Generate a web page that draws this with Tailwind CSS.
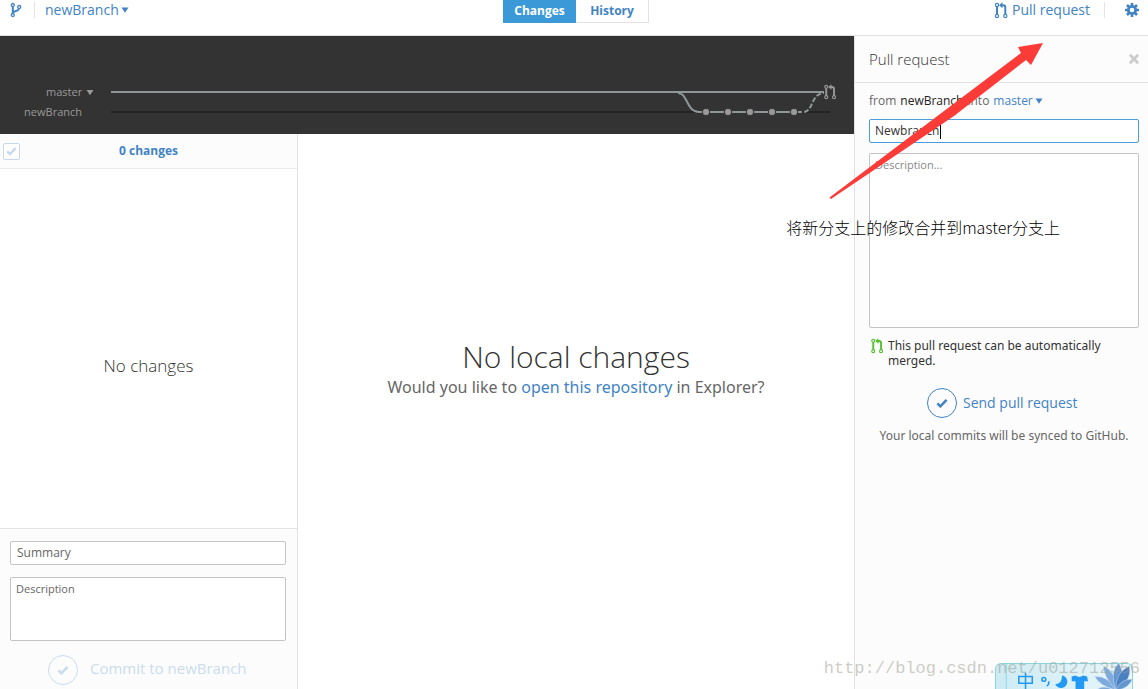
<!DOCTYPE html>
<html lang="en">
<head>
<meta charset="utf-8">
<title>newBranch</title>
<script src="https://cdn.jsdelivr.net/npm/@tailwindcss/browser@4"></script>
</head>
<body class="relative flex h-screen flex-col overflow-hidden bg-white font-['Open_Sans','Noto_Sans_CJK_SC',sans-serif] text-xs text-[#333]">
<svg class="hidden">
  <symbol id="pr" viewBox="0 0 14 17"><g fill="none" stroke="currentColor" stroke-width="1.2"><circle cx="3" cy="3" r="1.6"/><circle cx="3" cy="14" r="1.6"/><circle cx="11.3" cy="14" r="1.6"/><path d="M3 4.500v8" stroke-width="2"/><path d="M11.300 12.500V5.500Q11.300 3.200 9 3.200H7.500" stroke-width="2"/></g><path d="M8.500 .2v6L5 3.200z" fill="currentColor"/></symbol>
  <symbol id="check" viewBox="0 0 14 12"><path d="M1.5 6.5 5 10 12.5 2.2" fill="none" stroke="currentColor" stroke-width="3"/></symbol>
  <symbol id="down" viewBox="0 0 8 6"><path d="M.5 .5h7L4 5.8z" fill="currentColor"/></symbol>
</svg>

<header class="flex h-9 shrink-0 items-start border-b border-[#e2e2e2] text-[#4183c4]">
  <div class="flex h-5 flex-1 items-center">
    <button class="ml-2.5 h-4 w-3" aria-label="Create branch">
      <svg class="h-4 w-3" viewBox="0 0 12 16" fill="none" stroke="currentColor" stroke-width="1.3"><circle cx="2.8" cy="3" r="1.5"/><circle cx="2.8" cy="13" r="1.5"/><circle cx="9.2" cy="5" r="1.5"/><path d="M2.8 4.500v7M3 11q.5-1.500 3-2t3-2.500" stroke-width="2"/></svg>
    </button>
    <span class="ml-3 h-4 w-px bg-[#e5e5e5]"></span>
    <button class="ml-2.5 flex items-center gap-0.5 text-sm leading-5">newBranch<svg class="h-1.5 w-2"><use href="#down"/></svg></button>
  </div>
  <nav class="ml-1 flex h-[23px] text-xs leading-5 font-bold">
    <button class="w-[73px] bg-[#3b99d8] pb-0.5 text-white">Changes</button>
    <button class="w-[73px] border-r border-b border-[#e2e2e2]">History</button>
  </nav>
  <div class="flex h-5 flex-1 items-center justify-end">
    <button class="flex items-center gap-1 text-sm leading-5"><svg class="h-[17px] w-3.5"><use href="#pr"/></svg>Pull request</button>
    <span class="ml-3.5 h-4 w-px bg-[#e5e5e5]"></span>
    <button class="mr-[9px] ml-5 h-3.5 w-3.5" aria-label="Settings">
      <svg class="h-3.5 w-3.5" viewBox="0 0 14 14" fill="none" stroke="currentColor"><circle cx="7" cy="7" r="3.7" stroke-width="2.800"/><g stroke-width="2.600"><path d="M7 0v2.500M7 11.500V14M0 7h2.500M11.500 7H14M2 2l2 2M10 10l2 2M2 12l2-2M10 4l2-2"/></g></svg>
    </button>
  </div>
</header>

<div class="flex min-h-0 flex-1">
  <div class="flex min-w-0 flex-1 flex-col">
    <section class="flex h-[98px] shrink-0 bg-[#333] pt-[46px] text-[11px] text-[#999]" aria-label="Branch comparison">
      <div class="w-[111px] leading-5">
        <button class="ml-[46px] flex h-5 items-center gap-1">master<svg class="h-[7px] w-2"><use href="#down"/></svg></button>
        <div class="w-[82px] text-right">newBranch</div>
      </div>
      <div class="flex-1">
        <div class="mt-[9px] h-0.5 bg-[#8f9697]"></div>
        <div class="mt-[18px] h-0.5 bg-[#242424]"></div>
      </div>
      <svg class="h-10 w-[178px]" viewBox="0 0 178 40" fill="none">
        <path d="M0 30H154" stroke="#242424" stroke-width="2"/>
        <path d="M0 10H148" stroke="#8f9697" stroke-width="2"/>
        <path d="M2 11C12 11 10 30 23 30H118" stroke="#8f9697" stroke-width="2"/>
        <path d="M121 30h6C138 30 134 12 148 11" stroke="#8f9697" stroke-width="2" stroke-dasharray="5 2"/>
        <g fill="#999" stroke="#333" stroke-width="1"><circle cx="30" cy="30" r="3.700"/><circle cx="52" cy="30" r="3.700"/><circle cx="74" cy="30" r="3.700"/><circle cx="96" cy="30" r="3.700"/><circle cx="118" cy="30" r="3.700"/></g>
        <use href="#pr" x="147" y="2" width="14" height="16" color="#999"/>
      </svg>
    </section>

    <div class="flex min-h-0 flex-1">
      <aside class="flex w-[298px] flex-col border-r border-[#e2e2e2]">
        <div class="relative flex h-[35px] shrink-0 items-center border-b border-[#eaeaea] bg-[#fcfcfc]">
          <input type="checkbox" id="all" aria-label="Select all changes" class="ml-[3px] h-[17px] w-[17px] appearance-none rounded-xs border border-[#c6d9ec] bg-white">
          <svg class="pointer-events-none absolute left-1.5 h-2.5 w-[11px] text-[#c6d9ec]"><use href="#check"/></svg>
          <label for="all" class="flex-1 pr-5 text-center text-xs font-bold text-[#4183c4]">0 changes</label>
        </div>
        <p class="flex flex-1 items-center justify-center pt-9 text-[17px] font-light">No changes</p>
        <form class="flex h-[161px] flex-col border-t border-[#e2e2e2] bg-[#fcfcfc] px-2.5 pt-3">
          <input aria-label="Summary" placeholder="Summary" class="mr-px h-6 rounded-xs border border-[#c4c4c4] bg-white px-1.5 pb-0.5 text-xs placeholder:text-[#666]">
          <textarea aria-label="Description" placeholder="Description" class="mt-3 mr-px h-16 resize-none rounded-xs border border-[#c4c4c4] bg-white px-[5px] py-[3px] text-[11px] leading-4 placeholder:text-[#666]"></textarea>
          <button type="button" class="mt-3.5 ml-[38px] flex items-center gap-3 self-start text-[15px] text-[#c9dcee]">
            <span class="flex h-[30px] w-[30px] items-center justify-center rounded-full border border-[#c9dcee]"><svg class="h-2.5 w-3"><use href="#check"/></svg></span><span class="pb-1">Commit to newBranch</span>
          </button>
        </form>
      </aside>
      <main class="flex-1 pt-[204px] text-center">
        <h1 class="text-3xl leading-[37px] font-light">No local changes</h1>
        <p class="font-['Noto_Sans',sans-serif] text-base leading-6 text-[#666]">Would you like to <a href="#" class="text-[#4183c4]">open this repository</a> in Explorer?</p>
      </main>
    </div>
  </div>

  <aside class="w-[294px] border-l border-[#e2e2e2] bg-[#fcfcfc]">
    <div class="flex h-[47px] items-center border-b border-[#e2e2e2] pr-2 pl-3.5">
      <h2 class="flex-1 text-[15px] font-light">Pull request</h2>
      <button aria-label="Close" class="h-3 w-3"><svg class="h-3 w-3" viewBox="0 0 10 10"><path d="M1.500 1.500l7 7M8.500 1.500l-7 7" stroke="#ccc" stroke-width="2.400"/></svg></button>
    </div>
    <form class="pt-2 pr-[9px] pl-3.5">
      <div class="flex h-5 items-center gap-1 text-[#666]">from <span class="text-[#222]">newBranch</span> into <button type="button" class="flex items-center gap-0.5 text-[#4183c4]">master<svg class="h-1.5 w-2"><use href="#down"/></svg></button></div>
      <div class="relative mt-2 h-6">
        <input aria-label="Title" value="Newbranch" class="h-6 w-full rounded-xs border border-[#4a9ddf] bg-white px-[5px] pb-0.5 text-xs">
        <span class="absolute top-1 left-[71px] h-4 w-px bg-black"></span>
      </div>
      <textarea aria-label="Description" placeholder="Description..." class="mt-2.5 block h-[175px] w-full resize-none rounded-xs border border-[#c4c4c4] bg-white px-[5px] py-[3px] text-[11px] leading-4 placeholder:text-[#888]"></textarea>
      <p class="mt-2.5 flex gap-1 pl-px font-['Noto_Sans',sans-serif] text-xs leading-[15px]"><svg class="h-4 w-3.5 shrink-0 text-[#54c02e]"><use href="#pr"/></svg>This pull request can be automatically merged.</p>
      <button type="button" class="mt-5 ml-[58px] flex items-center gap-1.5 text-sm text-[#4183c4]">
        <span class="flex h-[30px] w-[30px] items-center justify-center rounded-full border border-[#4183c4]"><svg class="h-2.5 w-3"><use href="#check"/></svg></span>Send pull request
      </button>
      <p class="mt-2 text-center font-['Noto_Sans',sans-serif] text-xs leading-5 whitespace-nowrap text-[#666]">Your local commits will be synced to GitHub.</p>
    </form>
  </aside>
</div>

<!-- Input method bar floating over the window -->
<div class="absolute right-[15px] bottom-0 h-[26px] w-[138px] overflow-hidden rounded-t-md border border-b-0 border-[#8ad5df] bg-linear-to-r from-[#cdebf4] to-[#e8f6fa]">
  <svg class="h-full w-full" viewBox="0 0 138 26">
    <path d="M9 0v26" stroke="#8ad5df"/>
    <g fill="none" stroke="#2299f5" stroke-width="1.600"><path d="M22 13h14v7H22zM29 9v17"/><circle cx="48" cy="16" r="2"/><path d="M53 18q1 3-2 5"/></g>
    <path d="M67 12a6.500 6.500 0 1 1-7 9q7 0 7-9z" fill="#2299f5"/>
    <path d="M77 13l4-1q4 3 8 0l4 1 1 5h-4v8h-9v-8h-4z" fill="#2299f5"/>
    <g fill="#7fabdc" stroke="#d4e6f6" stroke-width=".5"><path d="M123 27Q106 23 101 13q14-1 22 14z"/><path d="M123 27Q110 13 110 2q13 6 15 25z"/><path d="M123 27Q116 9 126-1q7 11-1 28z" fill="#6496d0"/><path d="M123 27q-1-18 14-25 3 14-12 25z" fill="#4a7fc0"/><path d="M123 27q5-12 17-11-4 9-15 11z" fill="#6496d0"/><path d="M121 27q-12-6-18 0z"/></g>
  </svg>
</div>
<p class="absolute right-2 bottom-2 font-['Liberation_Mono',monospace] text-[17px] leading-6 text-[#9a9a8c]/50">http://blog.csdn.net/u012712556</p>

<!-- Annotation arrow and caption -->
<svg class="pointer-events-none absolute top-[42px] right-[105px] h-[158px] w-[214px]" viewBox="0 0 214 158"><path d="M214 1 202 23 197 18 125 74 2 157 .5 155.500 119 66 192 11 189 5z" fill="#fb3b37"/></svg>
<p class="pointer-events-none absolute top-[215px] right-[88px] font-['Noto_Sans_CJK_SC',sans-serif] text-base leading-6 font-light text-black">将新分支上的修改合并到master分支上</p>
</body>
</html>
